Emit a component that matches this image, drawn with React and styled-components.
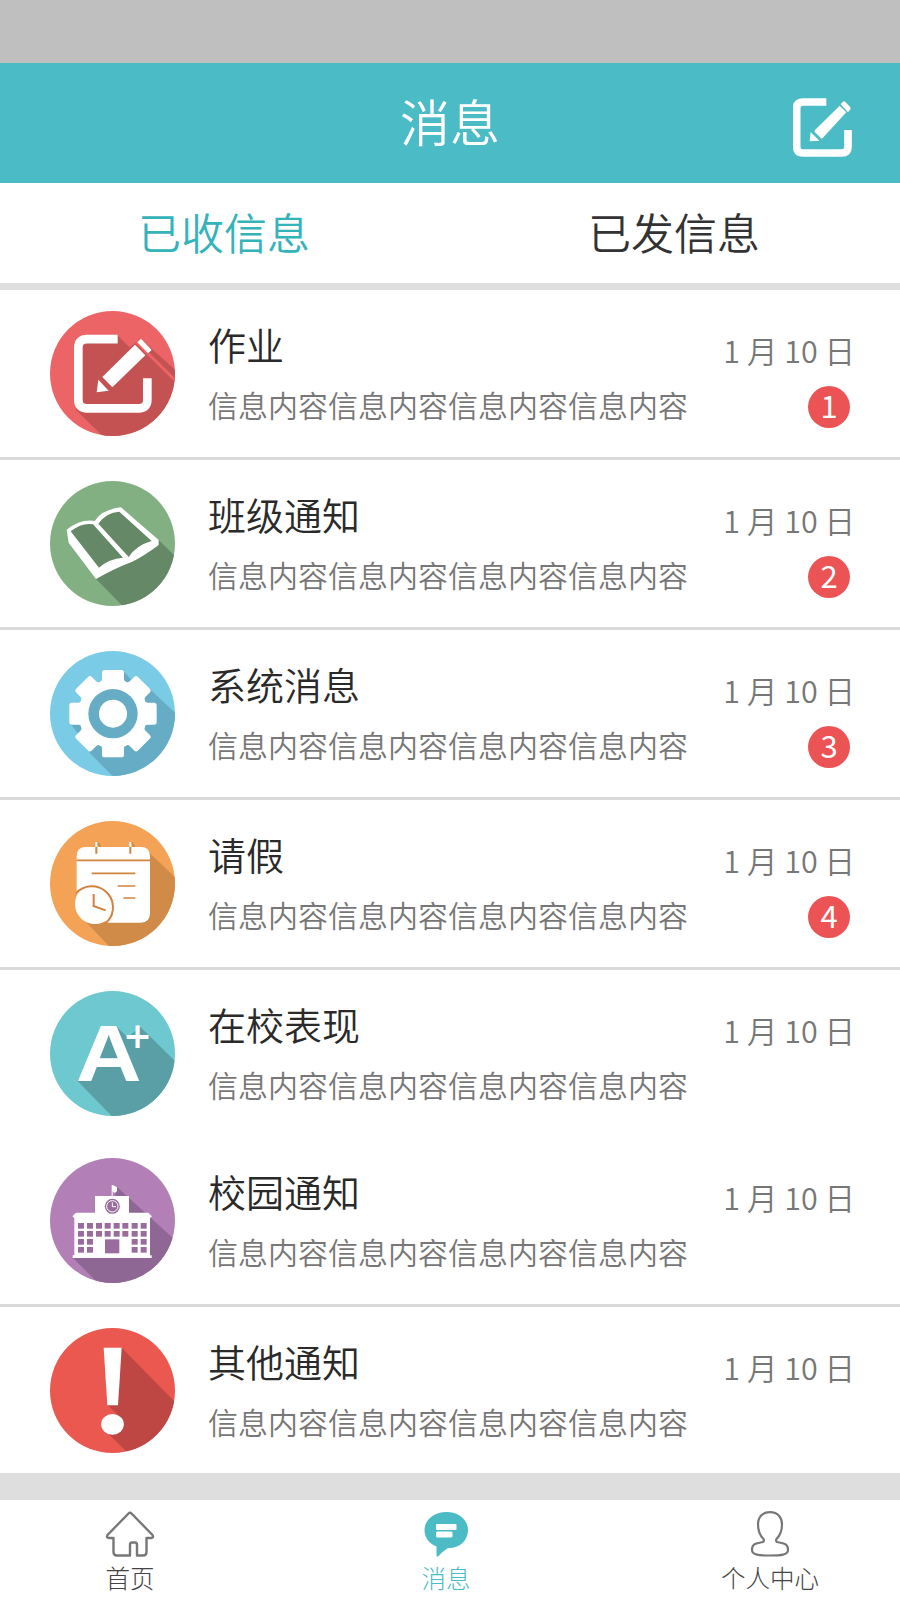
import React from "react";
import styled, { createGlobalStyle } from "styled-components";

const GlobalStyle = createGlobalStyle`
  body {
    margin: 0;
    background: #fff;
    font-family: "Noto Sans CJK SC", sans-serif;
    font-weight: 350;
  }
`;

const Page = styled.div`
  width: 900px;
  height: 1600px;
  display: flex;
  flex-direction: column;
  overflow: hidden;
  background: #fff;
`;

const StatusBar = styled.div`
  height: 63px;
  flex-shrink: 0;
  background: #bfbfbf;
`;

const Header = styled.header`
  height: 120px;
  flex-shrink: 0;
  display: grid;
  grid-template-columns: 1fr auto 1fr;
  align-items: center;
  padding: 0 48px;
  box-sizing: border-box;
  background: #4bbcc5;
  color: #fff;

  svg {
    width: 59px;
    height: 59px;
    margin-top: 9px;
    justify-self: end;
  }
`;

const Title = styled.h1`
  grid-column: 2;
  margin: 0;
  font-size: 50px;
  line-height: 115px;
  height: 120px;
  font-weight: 350;
`;

const Tabs = styled.div`
  height: 107px;
  flex-shrink: 0;
  display: flex;
  box-sizing: border-box;
  border-bottom: 7px solid #dedede;
`;

const Tab = styled.div`
  flex: 1;
  text-align: center;
  font-size: 43px;
  line-height: 96px;
  text-indent: -2px;
  color: ${(props) => (props.$active ? "#35b3bb" : "#333")};
`;

const List = styled.div`
  display: flex;
  flex-direction: column;
`;

const Row = styled.div`
  height: ${(props) => (props.$joined ? 167 : 170)}px;
  display: flex;
  box-sizing: border-box;
  padding: 21px 46px 0 50px;
  border-bottom: ${(props) => (props.$joined ? 0 : 3)}px solid #dadada;

  &:last-child {
    height: 166px;
    border-bottom: 0;
  }
`;

const Circle = styled.div`
  width: 125px;
  height: 125px;
  flex-shrink: 0;
  border-radius: 50%;
  overflow: hidden;
  background: ${(props) => props.$color};

  svg {
    display: block;
    width: 100%;
    height: 100%;
  }
`;

const Content = styled.div`
  flex: 1;
  padding-left: 33px;
`;

const Name = styled.div`
  margin-top: 6px;
  font-size: 38px;
  line-height: 54px;
  color: #2a2a2a;
`;

const Text = styled.div`
  margin-top: 11px;
  font-size: 30px;
  line-height: 44px;
  color: #777;
  white-space: nowrap;
`;

const Meta = styled.div`
  display: flex;
  flex-direction: column;
  align-items: flex-end;
`;

const DateText = styled.div`
  margin: 17px -1px 0 0;
  font-size: 30.5px;
  line-height: 44px;
  color: #777;
  white-space: nowrap;
`;

const Badge = styled.div`
  width: 42px;
  height: 42px;
  margin: 14px 4px 0 0;
  border-radius: 50%;
  background: #ec5355;
  color: #fff;
  font-size: 31px;
  line-height: 38px;
  font-weight: 400;
  text-align: center;
`;

const BottomBar = styled.nav`
  height: 127px;
  flex-shrink: 0;
  display: grid;
  grid-template-columns: 316px 324px 100px;
  box-sizing: border-box;
  padding: 11px 80px 0;
  border-top: 27px solid #dedede;
`;

const BarItem = styled.div`
  width: 100px;
  display: flex;
  flex-direction: column;
  align-items: center;
  font-size: 24.5px;
  line-height: 32px;
  font-weight: 300;
  white-space: nowrap;
  color: ${(props) => (props.$active ? "#4bbcc5" : "#444")};

  svg {
    width: 50px;
    height: 46px;
    margin-bottom: 5px;
  }
`;

const Compose = () => (
  <svg viewBox="1240 144 177 177" fill="#fff">
    <path
      d="M1340 156 H1270 Q1251 156 1251 175 V290 Q1251 309 1270 309 H1386 Q1405 309 1405 290 V240"
      fill="none"
      stroke="#fff"
      strokeWidth="23"
    />
    <path d="M1380 167 L1400 187 L1329 264 Q1326 267 1323 264 L1306 247 Q1303 244 1306 240 Z" />
    <path d="M1383 163 L1389 156 Q1393 152 1397 156 L1411 170 Q1414 174 1412 178 L1405 187 Z" />
    <path d="M1293 246 L1319 272 L1290 274 Z" />
  </svg>
);

const Homework = () => (
  <svg viewBox="30 33 375 375" fill="#fff">
    <path
      d="M232 105 L268 142 L303 117 L405 209 V408 H188 L108 330 L130 110 Z"
      fill="#c55252"
    />
    <path d="M290 127 L405 240" stroke="#ec6466" strokeWidth="9" />
    <path
      d="M233 117.5 H141 Q115 117.5 115 143 V299 Q115 325 141 325 H296 Q322 325 322 299 V235"
      fill="none"
      stroke="#fff"
      strokeWidth="26"
    />
    <path d="M285 134 L316 166 L217 262 L187 231 Z" />
    <path d="M303 116 L335 150 L324 160 L292 127 Z" />
    <path d="M175 239 L206 272 L170 277 Z" />
  </svg>
);

const Book = () => (
  <svg viewBox="30 33 375 375">
    <path d="M356 210 L405 258 V408 H248 L168 327 Z" fill="#658966" />
    <path
      d="M80 179 Q122 146 164 153 Q184 119 243 112 L356 210 V225 Q312 258 275 276 Q222 296 168 327 L86 218 Z"
      fill="#fff"
    />
    <path
      d="M92 184 Q126 157 159 163 L249 263 Q207 266 177 293 Z"
      fill="#658966"
    />
    <path
      d="M175 161 Q199 127 238 125 L335 213 Q289 226 266 261 Z"
      fill="#658966"
    />
  </svg>
);

const Gear = () => (
  <svg viewBox="30 33 375 375">
    <path
      d="M252 95 L275 120 L330 148 L405 218 V408 H218 L150 340 L110 275 L92 253 Z"
      fill="#67acc5"
    />
    <circle cx="219" cy="221" r="103" fill="#fff" />
    {[0, 45, 90, 135, 180, 225, 270, 315].map((angle) => (
      <path
        key={angle}
        transform={`rotate(${angle} 219 221)`}
        d="M194 90 H244 Q252 90 252 98 V118 Q253 126 262 127 L245 150 H193 L176 127 Q185 126 186 118 V98 Q186 90 194 90 Z"
        fill="#fff"
      />
    ))}
    <circle cx="219" cy="221" r="74" fill="#67acc5" />
    <circle cx="219" cy="221" r="42" fill="#fff" />
  </svg>
);

const Calendar = () => (
  <svg viewBox="30 33 375 375" fill="none" stroke="#d0833f" strokeWidth="5">
    <path
      d="M322 122 L405 202 V408 H207 L140 338 Z"
      fill="#d08b49"
      stroke="none"
    />
    <path d="M172 97 L182 111 M274 97 L284 111" />
    <path
      d="M110 139 Q110 111 138 111 H302 Q330 111 330 139 V310 Q330 338 302 338 H205 L165 282 L110 250 Z"
      fill="#fff"
      stroke="none"
    />
    <path d="M169 96 V111 M271 96 V111" stroke="#fff" strokeWidth="6" />
    <path d="M169 111 V131 M271 111 V131" strokeWidth="6" />
    <path d="M110 151 H330 M155 190 H286 M233 228 H286 M250 264 H286" />
    <circle cx="165" cy="282" r="60" fill="#fff" stroke="none" />
    <path d="M108 250 A63 63 0 0 1 203 334" strokeWidth="6" />
    <path d="M161 252 V288 L197 301" strokeWidth="6" />
  </svg>
);

const Grade = () => (
  <svg viewBox="30 33 375 375" fill="#fff" fontWeight="700">
    <path
      d="M228 138 L262 172 L298 145 V138 L405 243 V408 H215 L112 302 L206 165 Z"
      fill="#5a9fa6"
    />
    <text
      transform="translate(107 302) scale(1.15 1)"
      fontFamily="Liberation Sans"
      fontSize="238"
    >
      A
    </text>
    <text x="249" y="204" fontFamily="DejaVu Sans" fontSize="104">
      +
    </text>
  </svg>
);

const columns = [114, 141, 168, 194, 221, 247, 275, 302];
const floors = [231, 255, 279, 303];

const School = () => (
  <svg viewBox="30 36 375 375" fill="#fff">
    <path d="M230 122 L405 282 V412 H175 L99 336 L217 200 Z" fill="#8f6794" />
    <path d="M215 117 H218 L231 124 V136 L224 141 L218 136 V152 H215 Z" />
    <path d="M165 150 H267 V200 H325 L336 211 L330 216 V328 H335 V336 H98 V328 H103 V216 L97 211 L108 200 H165 Z" />
    {floors.map((y, floor) =>
      columns
        .filter((x, i) => floor < 2 || i < 2 || i > 5)
        .map((x) => (
          <rect key={`${x}-${y}`} x={x} y={y} width="18" height="17" fill="#9a6c9e" />
        ))
    )}
    <rect x="195" y="280" width="43" height="42" fill="#9a6c9e" />
    <circle cx="217" cy="181" r="22.5" fill="#9a6c9e" />
    <circle cx="217" cy="181" r="17" fill="#9a6c9e" stroke="#fff" strokeWidth="3" />
    <path d="M217 169 V182 H228" fill="none" stroke="#fff" strokeWidth="3" />
  </svg>
);

const Alert = () => (
  <svg viewBox="30 36 375 375" fill="#fff">
    <path
      d="M245 95 L405 258 V412 H265 L206 354 L230 294 L204 268 L220 200 Z"
      fill="#be4643"
    />
    <path d="M191 95 H245 L234 268 H202 Z" />
    <ellipse cx="217.5" cy="325" rx="34" ry="31" />
  </svg>
);

const HomeIcon = () => (
  <svg viewBox="0 0 50 46" fill="none" stroke="#777" strokeWidth="2.4" strokeLinejoin="round">
    <path d="M23.5 2.5 Q25 1 26.5 2.5 L47.5 24 Q49 27 46 27 H41.5 V41 Q41.5 44.5 38 44.5 H32 V34 Q32 31.5 30 31.5 H27 Q25 31.5 25 34 V44.5 H12 Q8.5 44.5 8.5 41 V27 H4 Q1 27 2.5 24 Z" />
  </svg>
);

const ChatIcon = () => (
  <svg viewBox="0 0 50 46">
    <path
      d="M25.5 1 C38 1 47 9 47 19 C47 30 38 37.5 27 37 Q22 40 17 45.5 H15.5 V35.5 C8 32.5 3.5 26.5 3.5 19 C3.5 9 13 1 25.5 1 Z"
      fill="#4bbcc5"
    />
    <rect x="15" y="13" width="20.5" height="6" rx="1" fill="#fff" />
    <rect x="15" y="20.5" width="16.5" height="6" rx="1.5" fill="#fff" />
  </svg>
);

const UserIcon = () => (
  <svg viewBox="0 0 50 46" fill="none" stroke="#777" strokeWidth="2.2">
    <path d="M25 1.2 C33 1.2 37 6.5 37 13.5 C37 20 34.5 25 31.5 28 Q30.5 30 32 31 C37 32.5 43 31.5 43 39 C43 44 36 44.5 25 44.5 C14 44.5 7 44 7 39 C7 31.5 13 32.5 18 31 Q19.5 30 18.5 28 C15.5 25 13 20 13 13.5 C13 6.5 17 1.2 25 1.2 Z" />
  </svg>
);

const messages = [
  { name: "作业", color: "#ec6466", icon: <Homework />, count: 1 },
  { name: "班级通知", color: "#82b082", icon: <Book />, count: 2 },
  { name: "系统消息", color: "#7acbe5", icon: <Gear />, count: 3 },
  { name: "请假", color: "#f3a256", icon: <Calendar />, count: 4 },
  { name: "在校表现", color: "#6ec8cf", icon: <Grade />, joined: true },
  { name: "校园通知", color: "#b27fb6", icon: <School /> },
  { name: "其他通知", color: "#eb5850", icon: <Alert /> },
];

const App = () => {
  return (
    <>
      <GlobalStyle />
      <Page>
        <StatusBar />
        <Header>
          <Title>消息</Title>
          <Compose />
        </Header>
        <Tabs>
          <Tab $active>已收信息</Tab>
          <Tab>已发信息</Tab>
        </Tabs>
        <List>
          {messages.map((item) => (
            <Row key={item.name} $joined={item.joined}>
              <Circle $color={item.color}>{item.icon}</Circle>
              <Content>
                <Name>{item.name}</Name>
                <Text>信息内容信息内容信息内容信息内容</Text>
              </Content>
              <Meta>
                <DateText>1 月 10 日</DateText>
                {item.count && <Badge>{item.count}</Badge>}
              </Meta>
            </Row>
          ))}
        </List>
        <BottomBar>
          <BarItem>
            <HomeIcon />
            首页
          </BarItem>
          <BarItem $active>
            <ChatIcon />
            消息
          </BarItem>
          <BarItem>
            <UserIcon />
            个人中心
          </BarItem>
        </BottomBar>
      </Page>
    </>
  );
};

export default App;
